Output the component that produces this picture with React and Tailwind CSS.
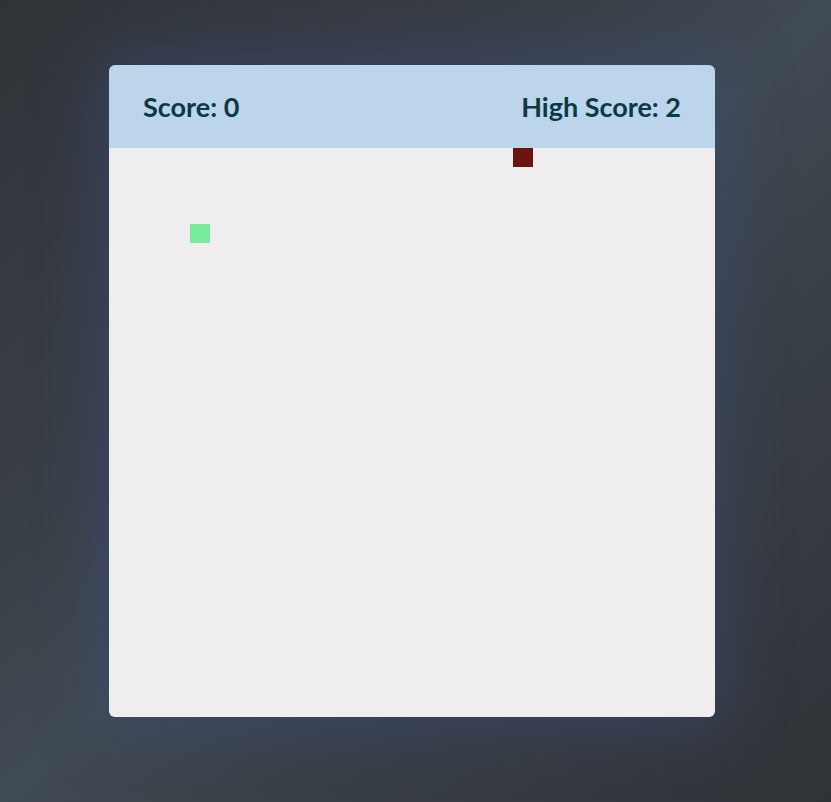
import React from 'react';

const App = () => {
  const snake = [{ x: 81, y: 76 }];
  const food = { x: 404, y: 0 };

  return (
    <div className="min-h-[802px] w-full bg-[linear-gradient(to_bottom_right,#2f3338_0%,#3a4047_35%,#404a53_50%,#3a4148_65%,#2f3237_100%)] pt-[65px] pl-[109px] font-['Lato','Open_Sans',sans-serif]">
      <div className="w-[606px] overflow-hidden rounded-[6px] shadow-[0_0_60px_8px_rgba(58,72,115,0.65)]">
        {/* Score bar */}
        <div className="flex h-[83px] items-center justify-between bg-[#bdd5ea] px-[34px] pt-[1px] text-[27px] font-bold text-[#0b3a45]">
          <span>Score: 0</span>
          <span>High Score: 2</span>
        </div>

        {/* Board */}
        <div className="relative h-[569px] bg-[#efeded]">
          {snake.map((s, i) => (
            <div
              key={i}
              className="absolute h-[19px] w-[20px] bg-[#7aea9b]"
              style={{ left: s.x, top: s.y }}
            />
          ))}
          <div
            className="absolute h-[19px] w-[20px] bg-[#6b1410]"
            style={{ left: food.x, top: food.y }}
          />
        </div>
      </div>
    </div>
  );
};

export default App;
